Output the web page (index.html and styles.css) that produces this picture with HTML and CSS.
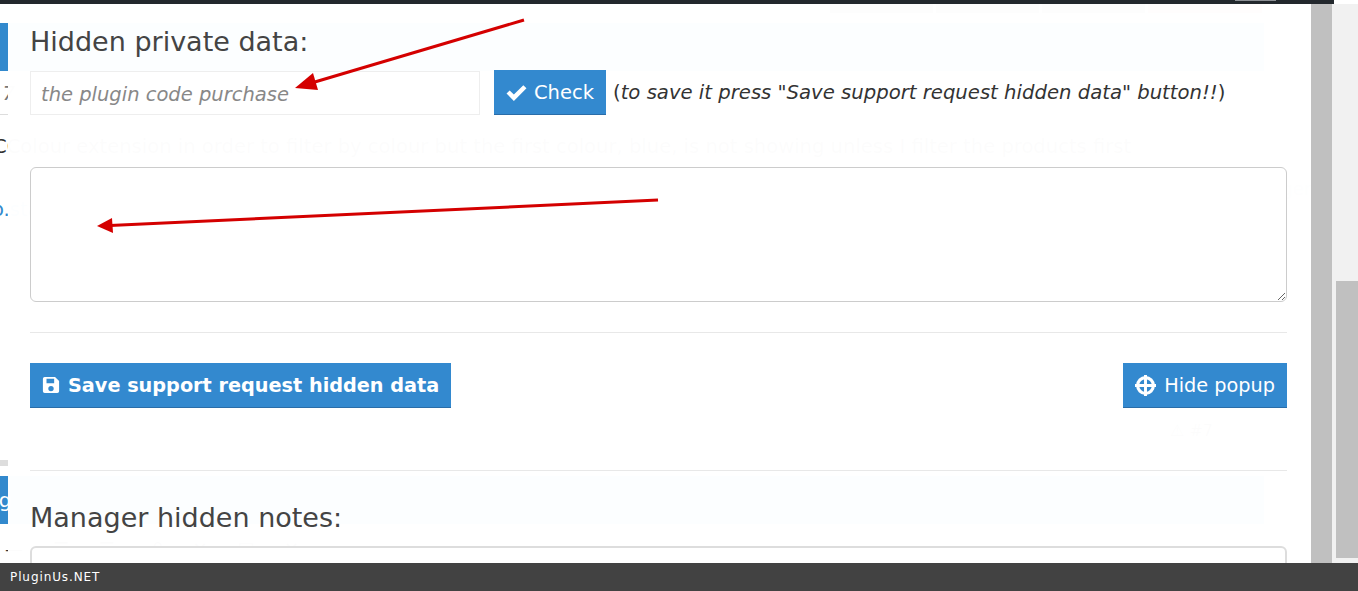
FILE: index.html
```html
<!DOCTYPE html>
<html lang="en">
<head>
    <meta charset="UTF-8">
    <title>Support request</title>
    <link rel="stylesheet" href="styles.css">
</head>
<body>

    <!-- Page behind the popup -->
    <div class="back-page">
        <div class="back-tabs"><span></span><span></span><span></span><span class="pink"></span></div>
        <div class="back-band"></div>
        <div class="back-row"><i>#17</i></div>
        <p class="back-text">CColour extension in order to filter by colour but the first colour, blue, is not showing unless I filter the products first</p>
        <div class="back-link-row">
            <a class="back-link">o.stackstaging.com/stock-checker/</a>
            <div class="back-notice"><span class="back-notice-box"></span>Private data of this request (support manager)</div>
        </div>
        <div class="back-warn">&#9888; #7</div>
        <div class="back-line"></div>
        <div class="back-band second"><span class="back-band-text">ng</span></div>
        <div class="back-toolbar">&#8212; &#9776; &#9776; &#9741; &#10005; &#9635; &#10005;</div>
    </div>

    <div class="top-bar"><span class="top-bar-btn"></span></div>

    <!-- Popup -->
    <div class="popup">
        <div class="popup-content">
            <h3 class="first">Hidden private data:</h3>
            <div class="check-row">
                <input type="text" class="code-input" placeholder="the plugin code purchase">
                <a class="btn check-btn">
                    <svg class="icon" viewBox="0 0 20 20"><path d="M0.500 11 L3.500 8 L7.500 12 L16.500 3 L19.500 6 L7.500 18 Z" fill="#fff"/></svg>
                    Check
                </a>
                <span class="check-note">(<em>to save it press "Save support request hidden data" button!!</em>)</span>
            </div>
            <textarea class="data-area"></textarea>
            <hr>
            <div class="btn-row">
                <a class="btn save-btn">
                    <svg class="icon" viewBox="0 0 20 20"><path fill-rule="evenodd" d="M3 1 H14.500 L19 5.500 V17 A2 2 0 0 1 17 19 H3 A2 2 0 0 1 1 17 V3 A2 2 0 0 1 3 1 Z M5 3 V8 H13.500 V3 Z M10 11 A3 3 0 1 0 10 17 A3 3 0 1 0 10 11 Z" fill="#fff"/></svg>
                    Save support request hidden data
                </a>
                <a class="btn hide-btn">
                    <svg class="icon" viewBox="0 0 20 20">
                        <circle cx="10" cy="10" r="7.500" fill="none" stroke="#fff" stroke-width="3"/>
                        <path d="M10 0 V20 M0 10 H20" stroke="#fff" stroke-width="2.800"/>
                    </svg>
                    Hide popup
                </a>
            </div>
            <hr class="second-line">
            <h3 class="notes-title">Manager hidden notes:</h3>
            <div class="notes-box"></div>
        </div>
        <div class="popup-scroll"></div>
    </div>

    <div class="page-scroll"><div class="page-thumb"></div></div>

    <div class="footer">PluginUs.NET</div>

    <!-- Red arrows drawn on the screenshot -->
    <svg class="arrows" viewBox="0 0 1358 591">
        <line x1="524" y1="20" x2="308" y2="84" stroke="#d40000" stroke-width="3"/>
        <polygon points="295,88 313,73 318,90" fill="#d40000"/>
        <line x1="658" y1="200" x2="110" y2="225.500" stroke="#d40000" stroke-width="3"/>
        <polygon points="97,226 112,218 113,233" fill="#d40000"/>
    </svg>

</body>
</html>
```

FILE: styles.css
```css
* {
    box-sizing: border-box;
}

html, body {
    margin: 0;
    height: 100%;
    overflow: hidden;
}

body {
    position: relative;
    font-family: "DejaVu Sans", Verdana, sans-serif;
    font-size: 20px;
    color: #444;
    background: #fff;
}

/* Page behind the popup */
.back-page {
    height: 591px;
    overflow: hidden;
    color: #333;
}

.back-tabs {
    display: flex;
    gap: 3px;
    height: 13px;
    margin-left: 830px;
    padding-top: 4px;
}

.back-tabs span {
    width: 103px;
    background: #5a5a5a;
}

.back-tabs .pink {
    width: 114px;
    background: #c86a6a;
}

.back-band {
    width: 1264px;
    height: 48px;
    margin-top: 10px;
    background: #3289cd;
    color: #fff;
    line-height: 48px;
}

.back-band.second {
    margin-top: 10px;
}

.back-band-text {
    margin-left: -14px;
}

.back-row {
    height: 44px;
    margin-left: -27px;
    line-height: 44px;
    border-bottom: 1px solid #ddd;
    color: #777;
}

.back-text {
    margin: 19px 0 0 -7px;
    font-size: 19.560px;
    line-height: 26px;
    white-space: nowrap;
}

.back-link-row {
    display: flex;
    height: 46px;
    margin-top: 5px;
    align-items: flex-start;
}

.back-link {
    width: 867px;
    margin-left: -8px;
    padding-top: 32px;
    color: #3289cd;
    font-size: 19.500px;
    line-height: 26px;
    flex: none;
}

.back-notice {
    display: flex;
    align-items: center;
    gap: 8px;
    width: 470px;
    height: 46px;
    margin-left: 3px;
    padding-left: 10px;
    background: #c8e0f0;
    color: #8a9ba8;
    font-size: 18px;
    white-space: nowrap;
    overflow: hidden;
    flex: none;
}

.back-notice-box {
    width: 18px;
    height: 18px;
    background: #e8d24a;
}

.back-warn {
    margin: 208px 0 0 1170px;
    font-size: 16px;
    line-height: 24px;
}

.back-line {
    height: 6px;
    margin-top: 17px;
    background: #ddd;
}

.back-toolbar {
    margin: 14px 0 0 5px;
    font-size: 18px;
    word-spacing: 24px;
    white-space: nowrap;
}

.top-bar {
    position: absolute;
    top: 0;
    left: 0;
    width: 1334px;
    height: 4px;
    background: #23282d;
}

.top-bar-btn {
    position: absolute;
    top: 0;
    left: 1235px;
    width: 41px;
    height: 1px;
    background: #8c8f94;
}

/* Popup */
.popup {
    position: absolute;
    top: 4px;
    left: 8px;
    width: 1324px;
    height: 559px;
    display: flex;
    overflow: hidden;
    background: rgba(255, 255, 255, 0.988);
}

.popup-content {
    flex: 1;
    padding: 0 24px 0 22px;
}

.popup-scroll {
    width: 21px;
    background: #c0c0c0;
}

h3 {
    margin: 0;
    font-size: 27px;
    font-weight: normal;
    line-height: 30px;
    color: #444;
}

h3.first {
    height: 67px;
    padding-top: 23px;
}

.notes-title {
    margin-bottom: 13px;
}

.check-row {
    display: flex;
    align-items: flex-start;
}

.code-input {
    width: 450px;
    height: 44px;
    padding: 2px 10px 0;
    border: 1px solid #eee;
    background: #fff;
    font-family: inherit;
    font-size: 19.500px;
    font-style: italic;
}

.code-input::placeholder {
    color: #888;
    opacity: 1;
}

.btn {
    display: flex;
    align-items: center;
    gap: 8px;
    height: 45px;
    padding: 0 12px;
    background: #3389cf;
    border-bottom: 1px solid #2a6da8;
    color: #fff;
    font-size: 19.300px;
    white-space: nowrap;
}

.check-btn {
    gap: 7px;
    margin: -1px 7px 0 14px;
    font-size: 19.500px;
}

.check-btn .icon,
.hide-btn .icon {
    width: 21px;
    height: 21px;
}

.check-note {
    font-size: 19.650px;
    line-height: 43px;
    color: #333;
}

.icon {
    width: 18px;
    height: 18px;
    flex: none;
}

.data-area {
    display: block;
    width: 100%;
    height: 135px;
    margin-top: 52px;
    border: 1px solid #ccc;
    border-radius: 6px;
    background: #fff;
}

hr {
    height: 0;
    margin: 30px 0;
    border: 0;
    border-top: 1px solid #e8e8e8;
}

.btn-row {
    display: flex;
    justify-content: space-between;
}

.save-btn {
    font-size: 19.250px;
    font-weight: bold;
}

.second-line {
    margin: 62px 0 32px;
}

.notes-box {
    height: 60px;
    border: 2px solid #ddd;
    border-radius: 6px;
    background: #fff;
}

/* Page scrollbar */
.page-scroll {
    position: absolute;
    top: 4px;
    right: 0;
    width: 26px;
    height: 559px;
    padding: 277px 0 5px 4px;
    background: #f1f1f1;
}

.page-thumb {
    height: 100%;
    background: #c0c0c0;
}

.footer {
    position: absolute;
    left: 0;
    right: 0;
    bottom: 0;
    height: 28px;
    padding-left: 10px;
    background: #424242;
    color: #fff;
    font-size: 12px;
    line-height: 28px;
    letter-spacing: 0.900px;
}

.arrows {
    position: absolute;
    top: 0;
    left: 0;
    width: 1358px;
    height: 591px;
    pointer-events: none;
}
```
